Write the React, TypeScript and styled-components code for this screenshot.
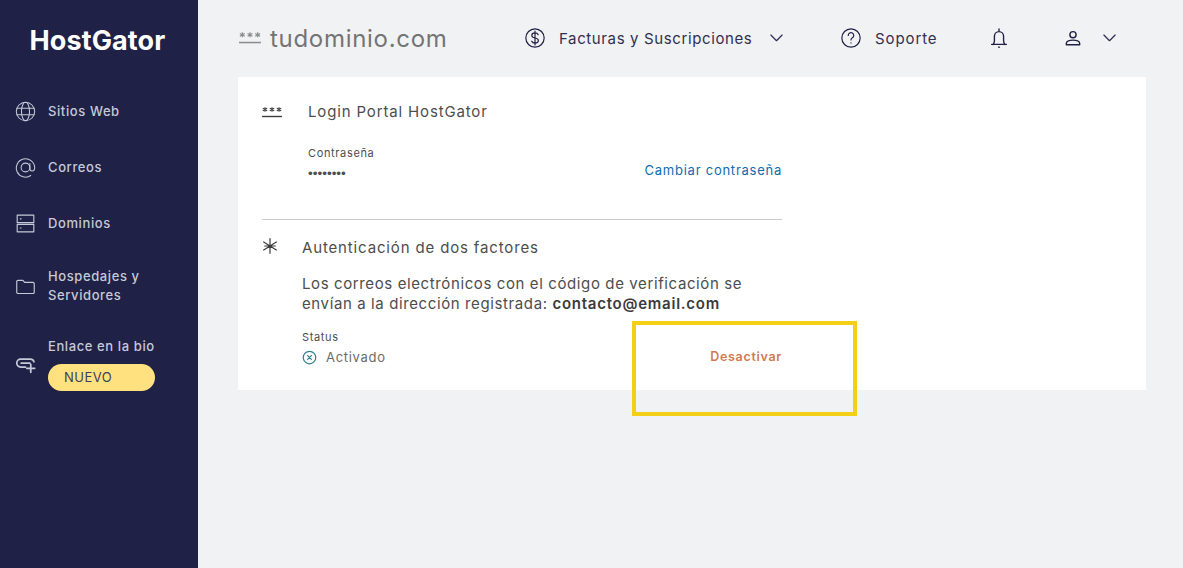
import React from "react";
import styled, { createGlobalStyle } from "styled-components";

const Global = createGlobalStyle`
  html, body { margin: 0; padding: 0; height: 100%; }
  body { font-family: Inter, "Liberation Sans", sans-serif; background: #f1f2f4; }
  #root { height: 568px; }
`;

const Page = styled.div`
  display: flex;
  width: 1183px;
  height: 568px;
  overflow: hidden;
  background: #f1f2f4;
`;

const Sidebar = styled.aside`
  width: 198px;
  flex: none;
  background: #202146;
  display: flex;
  flex-direction: column;
  padding: 27px 0 0 15px;
  box-sizing: border-box;
`;

const Logo = styled.div`
  color: #fff;
  font-family: Inter, sans-serif;
  font-weight: 700;
  font-size: 27px;
  line-height: 28px;
  letter-spacing: 0.1px;
  margin-left: 14.5px;
  margin-bottom: 28px;
`;

const NavList = styled.nav`
  display: flex;
  flex-direction: column;
`;

const NavItem = styled.div<{ $h: number }>`
  display: flex;
  align-items: center;
  gap: 12px;
  height: ${(p) => p.$h}px;
  color: #c6c9d8;
  svg { flex: none; }
`;

const NavLabel = styled.div`
  font-size: 13px;
  font-weight: 500;
  line-height: 19px;
  letter-spacing: 0.6px;
`;

const NavColumn = styled.div`
  display: flex;
  flex-direction: column;
  align-items: flex-start;
  gap: 8px;
`;

const Badge = styled.div`
  width: 107px;
  height: 27px;
  box-sizing: border-box;
  padding-left: 16px;
  border-radius: 14px;
  background: #ffe27f;
  color: #3c3c5c;
  font-size: 13px;
  line-height: 27px;
  letter-spacing: 0.5px;
`;

const Main = styled.main`
  flex: 1;
  min-width: 0;
  display: flex;
  flex-direction: column;
  padding: 0 37px 0 40px;
`;

const Header = styled.header`
  height: 77px;
  display: flex;
  align-items: center;
  position: relative;
  padding-bottom: 1px;
  box-sizing: border-box;
`;

const Domain = styled.div`
  display: flex;
  align-items: center;
  gap: 9px;
  width: 286px;
  box-sizing: border-box;
  padding-left: 1px;
  color: #747474;
  font-size: 24px;
  font-weight: 400;
  letter-spacing: 0.7px;
`;

const HeaderItem = styled.div<{ $w: number; $gap?: number; $pad?: number; $spacing?: number }>`
  display: flex;
  align-items: center;
  width: ${(p) => p.$w}px;
  box-sizing: border-box;
  padding-left: ${(p) => p.$pad ?? 0}px;
  color: #2f3052;
  font-size: 15px;
  letter-spacing: ${(p) => p.$spacing ?? 0.62}px;
  flex: none;
  gap: ${(p) => p.$gap ?? 13}px;
`;

const ChevronBox = styled.span`
  display: flex;
  margin-left: 4px;
  padding-top: 1px;
`;

const Card = styled.section`
  background: #fff;
  width: 908px;
  height: 313px;
  box-sizing: border-box;
  padding: 25px 24px 0;
`;

const Inner = styled.div`
  width: 520px;
`;

const TitleRow = styled.div<{ $gap: number }>`
  display: flex;
  align-items: center;
  gap: ${(p) => p.$gap}px;
  color: #4d4d4d;
  font-size: 15px;
  line-height: 20px;
  letter-spacing: 0.85px;
  height: 20px;
`;

const PasswordRow = styled.div`
  display: flex;
  justify-content: space-between;
  align-items: flex-end;
  padding-left: 46px;
  margin-top: 21px;
  height: 41px;
  box-sizing: border-box;
  padding-bottom: 3px;
`;

const SmallLabel = styled.div`
  font-size: 11px;
  line-height: 15px;
  color: #4d4d4d;
  letter-spacing: 0.65px;
`;

const Mask = styled.div`
  font-size: 13.5px;
  line-height: 15px;
  margin-top: 5px;
  color: #4d4d4d;
  letter-spacing: 0;
  font-family: "Liberation Sans", sans-serif;
`;

const LinkText = styled.a`
  color: #0f6cb0;
  font-size: 13px;
  letter-spacing: 0.75px;
  line-height: 20px;
  margin-bottom: 1px;
`;

const Divider = styled.hr`
  border: 0;
  border-top: 1px solid #c9ccd0;
  margin: 35px 0 18px;
`;

const AsteriskBox = styled.span`
  display: flex;
  margin-top: -5px;
`;

const Description = styled.p`
  margin: 16px 0 0 40px;
  font-size: 15px;
  line-height: 20px;
  color: #4d4d4d;
  letter-spacing: 0.61px;
  white-space: nowrap;
  b { font-weight: 600; color: #3a3a3a; letter-spacing: 0.75px; }
`;

const StatusBlock = styled.div`
  display: flex;
  justify-content: space-between;
  align-items: flex-end;
  margin: 16px 0 0 40px;
`;

const StatusValue = styled.div`
  display: flex;
  align-items: center;
  gap: 9px;
  margin-top: 3px;
  color: #6b6b6b;
  font-size: 13px;
  line-height: 18px;
  letter-spacing: 0.7px;
`;

const Deactivate = styled.a`
  color: #cf7b52;
  font-size: 12.5px;
  font-weight: 600;
  line-height: 18px;
  letter-spacing: 0.7px;
`;

const Highlight = styled.div`
  position: absolute;
  left: 632px;
  top: 321px;
  width: 225px;
  height: 95px;
  box-sizing: border-box;
  border: 4px solid #f3d016;
  pointer-events: none;
`;

const Svg = ({ s = 24, c = "currentColor", w = 1.5, children }: { s?: number; c?: string; w?: number; children: React.ReactNode }) => (
  <svg width={s} height={s} viewBox="0 0 24 24" fill="none" stroke={c} strokeWidth={w} strokeLinecap="round" strokeLinejoin="round">
    {children}
  </svg>
);

const Stars = ({ c, width }: { c: string; width: number }) => (
  <svg width={width} height={width * 0.6} viewBox="0 0 20 12" fill="none" stroke={c}>
    {[3, 10, 17].map((x) => (
      <g key={x} strokeWidth="1.1">
        <path d={`M${x} 1.2v4.6M${x - 2.2} 2.2l4.4 2.6M${x + 2.2} 2.2l-4.4 2.6`} />
      </g>
    ))}
    <path d="M0 10.5h20" strokeWidth="1.4" />
  </svg>
);

const Chevron = () => (
  <ChevronBox>
    <Svg s={15} w={2}>
      <path d="M3 6.5l9 9 9-9" />
    </Svg>
  </ChevronBox>
);

export default function App() {
  return (
    <>
      <Global />
      <Page>
        <Sidebar>
          <Logo>HostGator</Logo>
          <NavList>
            <NavItem $h={56}>
              <Svg s={21} w={1.2}>
                <circle cx="12" cy="12" r="10.5" />
                <ellipse cx="12" cy="12" rx="4.6" ry="10.5" />
                <path d="M2.2 8.3h19.6M2.2 15.7h19.6" />
              </Svg>
              <NavLabel>Sitios Web</NavLabel>
            </NavItem>
            <NavItem $h={56}>
              <Svg s={21} w={1.2}>
                <path d="M18 21.2A10.5 10.5 0 1 1 22.5 12c0 2.4-1 4-2.8 4s-2.7-1.4-2.7-3.2V7.5" />
                <circle cx="12" cy="12" r="5" />
              </Svg>
              <NavLabel>Correos</NavLabel>
            </NavItem>
            <NavItem $h={56}>
              <Svg s={21} w={1.3}>
                <rect x="2.5" y="2.5" width="19" height="8.5" />
                <rect x="2.5" y="13" width="19" height="8.5" />
                <path d="M6 6.7h1M6 17.2h1" />
              </Svg>
              <NavLabel>Dominios</NavLabel>
            </NavItem>
            <NavItem $h={70}>
              <Svg s={21} w={1.3}>
                <path d="M2 6.5a1.5 1.5 0 0 1 1.5-1.5H9l2 2.3h9.5A1.5 1.5 0 0 1 22 8.8v9.7a1.5 1.5 0 0 1-1.5 1.5h-17A1.5 1.5 0 0 1 2 18.5z" />
              </Svg>
              <NavLabel>Hospedajes y<br />Servidores</NavLabel>
            </NavItem>
            <NavItem $h={85}>
              <Svg s={21} w={2}>
                <path d="M14 7H6.500a4.500 4.500 0 0 0 0 9h5.500M7 11.500h10M14 7h3.500a4.500 4.500 0 0 1 4.200 3M18 13v9M13.500 17.500h9" />
              </Svg>
              <NavColumn>
                <NavLabel>Enlace en la bio</NavLabel>
                <Badge>NUEVO</Badge>
              </NavColumn>
            </NavItem>
          </NavList>
        </Sidebar>
        <Main>
          <Header>
            <Domain>
              <Stars c="#8d8d8d" width={22} />
              tudominio.com
            </Domain>
            <HeaderItem $w={316} $gap={13}>
              <Svg s={22} c="#1f2045" w={1.3}>
                <circle cx="12" cy="12" r="10" />
                <path d="M15.500 8.500c-.6-1.300-2-2-3.500-2-2 0-3.500 1-3.500 2.700 0 3.800 7.200 1.800 7.200 5.600 0 1.700-1.600 2.700-3.700 2.700-1.600 0-3-.7-3.600-2M12 4.500v15" />
              </Svg>
              <span>Facturas y Suscripciones</span>
              <Chevron />
            </HeaderItem>
            <HeaderItem $w={148} $spacing={0.9}>
              <Svg s={22} c="#1f2045" w={1.3}>
                <circle cx="12" cy="12" r="10" />
                <path d="M9 9.200a3 3 0 1 1 4.500 2.600c-1 .6-1.500 1.200-1.500 2.400M12 17.300v.2" />
              </Svg>
              <span>Soporte</span>
            </HeaderItem>
            <HeaderItem $w={74}>
              <Svg s={22} c="#1f2045" w={1.5}>
                <path d="M4 19h16M5.500 19c1-1 1.500-2 1.500-4v-5a5 5 0 0 1 10 0v5c0 2 .5 3 1.500 4M11.500 22h1M12 2v2" />
              </Svg>
            </HeaderItem>
            <HeaderItem $w={60} $gap={15} $pad={1}>
              <Svg s={20} c="#1f2045" w={1.7}>
                <circle cx="12" cy="8" r="3.700" />
                <path d="M4 20v-1.500c0-2.500 4-4 8-4s8 1.500 8 4V20z" />
              </Svg>
              <Chevron />
            </HeaderItem>
          </Header>
          <Card>
            <Inner>
              <TitleRow $gap={26}>
                <Stars c="#3d3d3d" width={20} />
                Login Portal HostGator
              </TitleRow>
              <PasswordRow>
                <div>
                  <SmallLabel>Contraseña</SmallLabel>
                  <Mask>••••••••</Mask>
                </div>
                <LinkText>Cambiar contraseña</LinkText>
              </PasswordRow>
              <Divider />
              <TitleRow $gap={24}>
                <AsteriskBox>
                  <Svg s={16} c="#3d3d3d" w={1.8}>
                    <path d="M12 1v22M2.500 6l19 12M21.500 6l-19 12M4 12h16" />
                  </Svg>
                </AsteriskBox>
                Autenticación de dos factores
              </TitleRow>
              <Description>
                Los correos electrónicos con el código de verificación se
                <br />
                envían a la dirección registrada: <b>contacto@email.com</b>
              </Description>
              <StatusBlock>
                <div>
                  <SmallLabel>Status</SmallLabel>
                  <StatusValue>
                    <Svg s={15} c="#2f8190" w={2}>
                      <circle cx="12" cy="12" r="10" />
                      <path d="M9 9l6 6M15 9l-6 6" />
                    </Svg>
                    Activado
                  </StatusValue>
                </div>
                <Deactivate>Desactivar</Deactivate>
              </StatusBlock>
            </Inner>
          </Card>
        </Main>
        <Highlight />
      </Page>
    </>
  );
}
